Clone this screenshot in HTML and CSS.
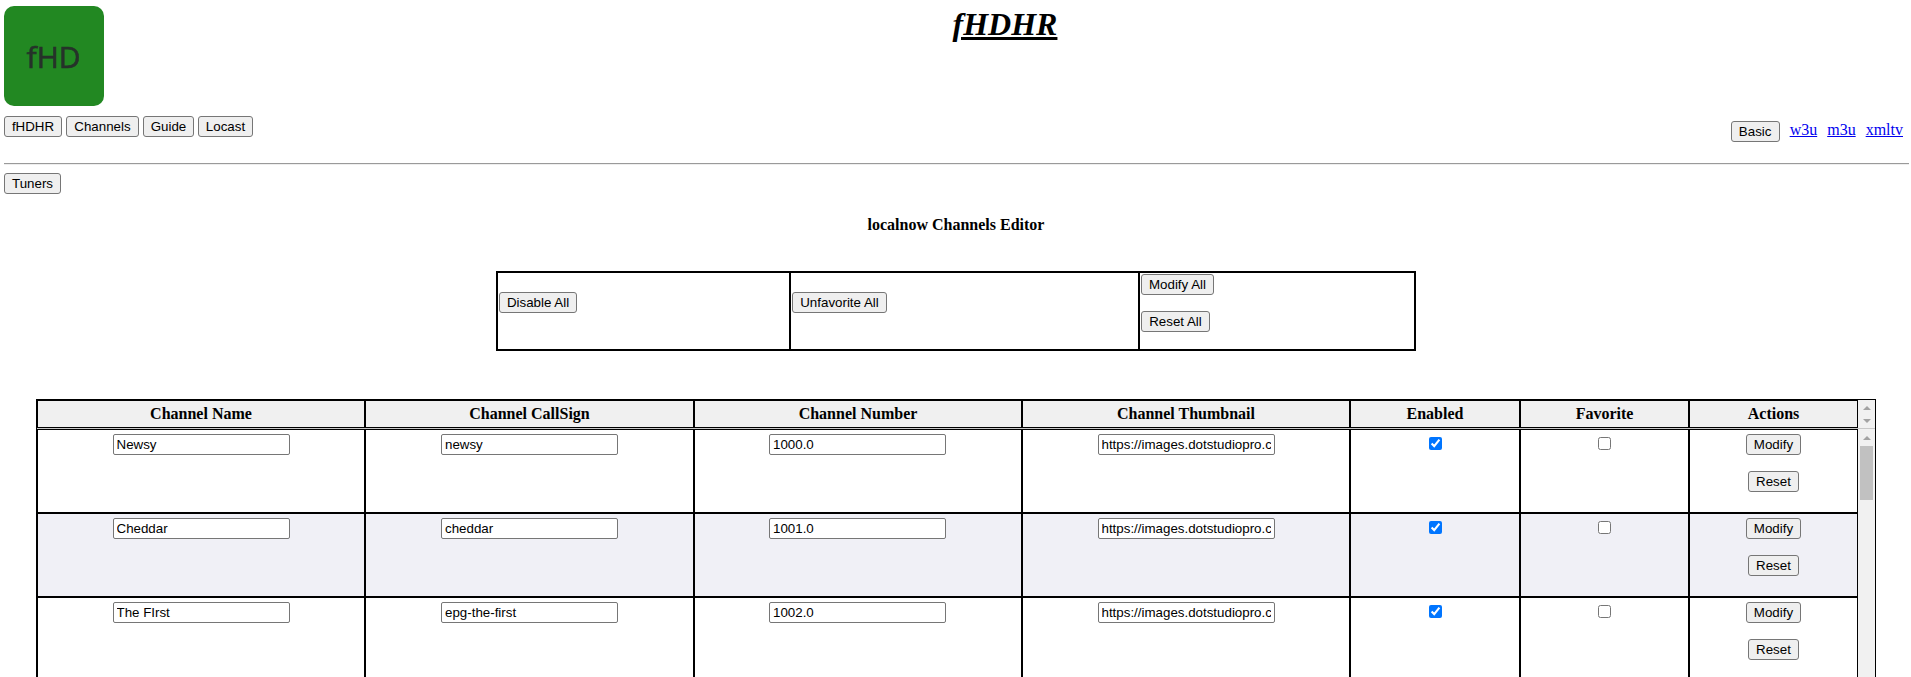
FILE: index.html
```html
<!DOCTYPE html>
<html lang="en">
<head>
<meta charset="utf-8">
<title>fHDHR</title>
<link rel="stylesheet" href="styles.css">
</head>
<body>
<header class="top">
  <svg class="logo" width="100" height="100" viewBox="0 0 100 100"><rect width="100" height="100" rx="10" fill="#228822"/><text class="logo-text" x="22.6" y="61.5" textLength="54">fHD</text></svg>
  <h1 class="title">fHDHR</h1>
</header>
<nav class="nav">
  <div class="nav-left"><button class="w58">fHDHR</button><button class="w73">Channels</button><button class="w51">Guide</button><button class="w55">Locast</button></div>
  <div class="nav-right"><button class="w49">Basic</button><a href="#">w3u</a><a href="#">m3u</a><a href="#">xmltv</a></div>
</nav>
<hr class="rule">
<div class="subnav"><button class="w57">Tuners</button></div>
<h4 class="heading">localnow Channels Editor</h4>
<section class="bulk">
  <div><button class="w78">Disable All</button></div>
  <div><button class="w95">Unfavorite All</button></div>
  <div class="stack"><button class="w73">Modify All</button><button class="w69">Reset All</button></div>
</section>
<section class="channels">
  <div class="head">
    <div class="row"><b>Channel Name</b><b>Channel CallSign</b><b>Channel Number</b><b>Channel Thumbnail</b><b>Enabled</b><b>Favorite</b><b>Actions</b></div>
    <div class="bar"><i class="up"></i><i class="down"></i></div>
  </div>
  <div class="body">
    <div class="rows">
      <div class="row"><div><input value="Newsy"></div><div><input value="newsy"></div><div><input value="1000.0"></div><div><input value="https://images.dotstudiopro.com/"></div><div><input type="checkbox" checked></div><div><input type="checkbox"></div><div class="stack"><button class="w55">Modify</button><button class="w51">Reset</button></div></div>
      <div class="row alt"><div><input value="Cheddar"></div><div><input value="cheddar"></div><div><input value="1001.0"></div><div><input value="https://images.dotstudiopro.com/"></div><div><input type="checkbox" checked></div><div><input type="checkbox"></div><div class="stack"><button class="w55">Modify</button><button class="w51">Reset</button></div></div>
      <div class="row"><div><input value="The FIrst"></div><div><input value="epg-the-first"></div><div><input value="1002.0"></div><div><input value="https://images.dotstudiopro.com/"></div><div><input type="checkbox" checked></div><div><input type="checkbox"></div><div class="stack"><button class="w55">Modify</button><button class="w51">Reset</button></div></div>
    </div>
    <div class="bar"><i class="up"></i><span class="thumb"></span></div>
  </div>
</section>
</body>
</html>
```

FILE: styles.css
```css
* { box-sizing: border-box; }
html { overflow: hidden; }
body {
  margin: 0;
  height: 677px;
  overflow: hidden;
  padding: 6px 0 0 4px;
  background: #fff;
  color: #000;
  font: 16px "Liberation Serif", "Times New Roman", serif;
}
button {
  display: block;
  height: 21px;
  padding: 0;
  border: 1px solid #767676;
  border-radius: 3px;
  background: #efefef;
  color: #000;
  font: 13.333px/18px "Liberation Sans", Arial, sans-serif;
  text-align: center;
  white-space: nowrap;
}
.w49 { width: 49px; }
.w51 { width: 51px; }
.w55 { width: 55px; }
.w57 { width: 57px; }
.w58 { width: 58px; }
.w69 { width: 69px; }
.w73 { width: 73px; }
.w78 { width: 78px; }
.w95 { width: 95px; }

.top { display: flex; height: 110px; }
.logo { flex: none; }
.logo-text {
  font: 30px "Open Sans", "Noto Sans", sans-serif;
  fill: #26322a;
  stroke: #26322a;
  stroke-width: 0.6px;
  filter: blur(0.6px);
}
.title {
  flex: 1;
  margin: 0 5px 0 0;
  text-align: center;
  font-size: 32px;
  line-height: 37px;
  font-style: italic;
  text-decoration: underline 3px;
}

.nav { display: flex; justify-content: space-between; height: 47px; }
.nav-left { display: flex; gap: 4px; }
.nav-right { display: flex; gap: 10px; padding: 5px 8px 0 0; line-height: 18px; }
.nav-right a { color: #00e; }
.rule { margin: 0 2px 0 0; border: 0 solid; border-width: 1px 0; border-color: #9a9a9a transparent #eee; }
.subnav { padding-top: 8px; height: 51px; }
.heading { margin: 0 0 37px; padding-right: 3px; text-align: center; line-height: 18px; font-size: 16px; }

.bulk {
  display: grid;
  grid-template-columns: 291px 347px 274px;
  gap: 2px;
  width: 920px;
  height: 80px;
  margin-left: 492px;
  border: 2px solid #000;
  background: #000;
}
.bulk > div { background: #fff; padding: 19px 1px 0; }
.bulk > .stack { padding-top: 1px; }
.stack button + button { margin-top: 16px; }

.channels {
  width: 1840px;
  height: 290px;
  margin: 48px 0 0 32px;
  border: 1px solid #000;
}
.head, .body { display: grid; grid-template-columns: 1821px 17px; }
.row {
  display: grid;
  grid-template-columns: 326px 327px 326px 326px 168px 167px 167px;
  gap: 2px;
  padding-left: 1px;
  padding-right: 1px;
  background: #000;
}
.head { border-bottom: 1px solid #c8c8c8; }
.head .row { height: 28px; padding-top: 1px; padding-bottom: 1px; }
.head b { background: #f0f0f0; text-align: center; line-height: 26px; }
.body .row { height: 84px; padding-bottom: 2px; }
.body .row:first-child { height: 85px; padding-top: 1px; }
.row > div { background: #fff; padding-top: 4px; text-align: center; }
.row > div:nth-child(3) { padding-right: 1px; }
.row.alt > div { background: #f0f0f6; }
.row .stack button { margin-left: auto; margin-right: auto; }
input {
  display: block;
  width: 177px;
  height: 21px;
  margin: 0 auto;
  padding: 0 3px 1px;
  border: 1px solid #767676;
  border-radius: 2px;
  background: #fff;
  color: #000;
  font: 13.333px "Liberation Sans", Arial, sans-serif;
}
input[type="checkbox"] { width: 13px; height: 13px; margin-top: 3px; padding: 0; }

.bar { display: flex; flex-direction: column; align-items: center; background: #f1f1f1; }
.up, .down { width: 0; height: 0; border: 4px solid transparent; border-top-width: 0; border-bottom: 4px solid #a3a3a3; }
.head .up { margin-top: 6px; }
.down { margin-top: 9px; border-width: 4px 4px 0; border-top-color: #a3a3a3; }
.body .up { margin-top: 7px; }
.thumb { width: 13px; height: 54px; margin-top: 6px; background: #c1c1c1; }
```
